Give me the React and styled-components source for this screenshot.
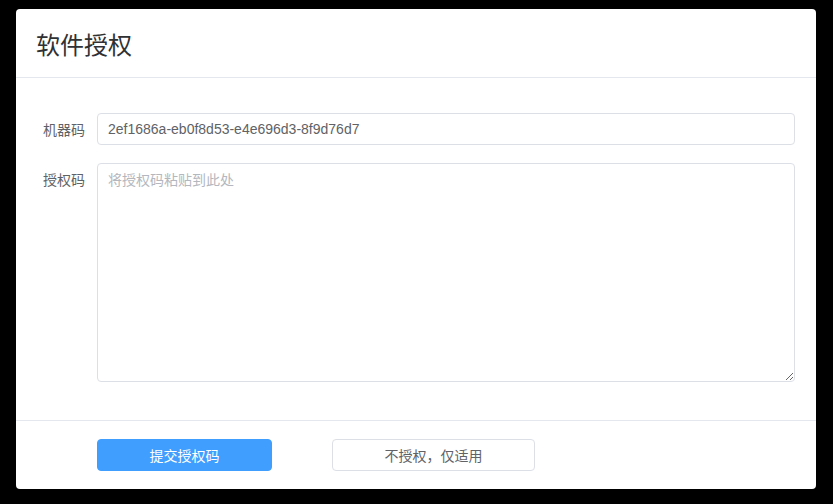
import React from "react";
import styled, { createGlobalStyle } from "styled-components";

const Global = createGlobalStyle`
  html, body { margin: 0; padding: 0; background: #000; }
  body { font-family: "Liberation Sans", "Noto Sans CJK SC", sans-serif; }
  * { box-sizing: border-box; }
`;

const Page = styled.div`
  width: 833px;
  height: 504px;
  background: #000;
  padding: 9px 17px 15px 16px;
`;

const Dialog = styled.div`
  width: 800px;
  height: 480px;
  background: #fff;
  border-radius: 4px;
  display: flex;
  flex-direction: column;
`;

const Header = styled.div`
  height: 69px;
  flex: none;
  border-bottom: 1px solid #e4e7ed;
  display: flex;
  align-items: center;
  padding: 0 21px 0 20px;
`;

const Title = styled.h2`
  margin: 0;
  font-size: 24px;
  font-weight: 400;
  color: #303133;
  font-family: "Noto Sans CJK SC", sans-serif;
`;

const Body = styled.div`
  flex: 1;
  padding: 35px 21px 0 20px;
  display: flex;
  flex-direction: column;
  gap: 18px;
  border-bottom: 1px solid #e4e7ed;
`;

const Row = styled.div`
  display: flex;
  align-items: flex-start;
`;

const Label = styled.label`
  width: 61px;
  padding-right: 12px;
  flex: none;
  text-align: right;
  font-size: 14px;
  color: #606266;
  line-height: 32px;
  font-family: "Noto Sans CJK SC", sans-serif;
`;

const Input = styled.input`
  flex: 1;
  height: 32px;
  border: 1px solid #dcdfe6;
  border-radius: 4px;
  padding: 0 10px;
  font-size: 14px;
  color: #606266;
  font-family: "Liberation Sans", "Noto Sans CJK SC", sans-serif;
  outline: none;
`;

const TextArea = styled.textarea`
  flex: 1;
  height: 219px;
  border: 1px solid #dcdfe6;
  border-radius: 4px;
  padding: 5px 10px;
  font-size: 14px;
  line-height: 20px;
  color: #606266;
  font-family: "Noto Sans CJK SC", sans-serif;
  resize: vertical;
  outline: none;
  &::placeholder { color: #b4b7bd; }
`;

const Footer = styled.div`
  height: 68px;
  flex: none;
  padding: 18px 0 0 81px;
  display: flex;
  align-items: flex-start;
  gap: 60px;
`;

const Button = styled.button`
  height: 32px;
  width: ${(p) => p.$w}px;
  border-radius: 4px;
  font-size: 14px;
  font-family: "Noto Sans CJK SC", sans-serif;
  cursor: pointer;
  border: 1px solid ${(p) => (p.$primary ? "#409eff" : "#dcdfe6")};
  background: ${(p) => (p.$primary ? "#409eff" : "#fff")};
  color: ${(p) => (p.$primary ? "#fff" : "#606266")};
  padding: 0;
`;

export default function App() {
  return (
    <>
      <Global />
      <Page>
        <Dialog>
          <Header>
            <Title>软件授权</Title>
          </Header>
          <Body>
            <Row>
              <Label>机器码</Label>
              <Input readOnly value="2ef1686a-eb0f8d53-e4e696d3-8f9d76d7" />
            </Row>
            <Row>
              <Label>授权码</Label>
              <TextArea placeholder="将授权码粘贴到此处" />
            </Row>
          </Body>
          <Footer>
            <Button $primary $w={175}>提交授权码</Button>
            <Button $w={203}>不授权，仅适用</Button>
          </Footer>
        </Dialog>
      </Page>
    </>
  );
}
